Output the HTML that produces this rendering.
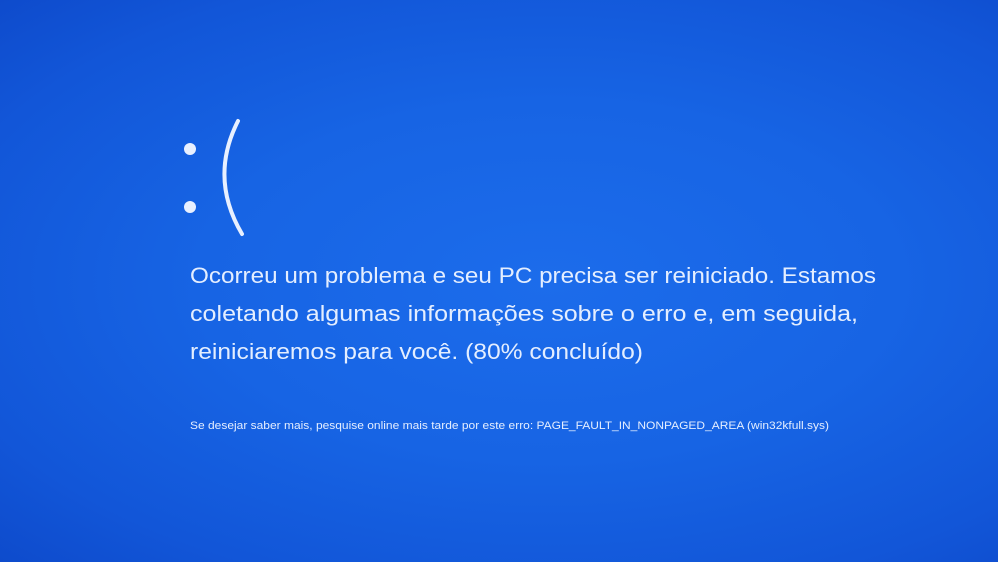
<!DOCTYPE html>
<html><head><meta charset="utf-8"><style>
html,body{margin:0;padding:0;width:998px;height:562px;overflow:hidden}
body{background:radial-gradient(ellipse at 55% 50%,#1c6ceb 0%,#1764e4 45%,#1256d8 80%,#0e4bcc 100%)}
svg{position:absolute;left:0;top:0}
text{font-family:"Liberation Sans",sans-serif;fill:#e4eeff}
</style></head><body>
<svg width="998" height="562">
<circle cx="190" cy="149" r="6" fill="#e8f0ff"/>
<circle cx="190" cy="207" r="6" fill="#e8f0ff"/>
<path d="M238 121 Q209 178 242 234" stroke="#e8f0ff" stroke-width="4" fill="none" stroke-linecap="round"/>
<text x="190" y="283" font-size="22" textLength="686" lengthAdjust="spacingAndGlyphs">Ocorreu um problema e seu PC precisa ser reiniciado. Estamos</text>
<text x="190" y="321" font-size="22" textLength="668" lengthAdjust="spacingAndGlyphs">coletando algumas informações sobre o erro e, em seguida,</text>
<text x="190" y="359" font-size="22" textLength="453" lengthAdjust="spacingAndGlyphs">reiniciaremos para você. (80% concluído)</text>
<text x="190" y="429" font-size="11" textLength="639" lengthAdjust="spacingAndGlyphs">Se desejar saber mais, pesquise online mais tarde por este erro: PAGE_FAULT_IN_NONPAGED_AREA (win32kfull.sys)</text>
</svg>
</body></html>
